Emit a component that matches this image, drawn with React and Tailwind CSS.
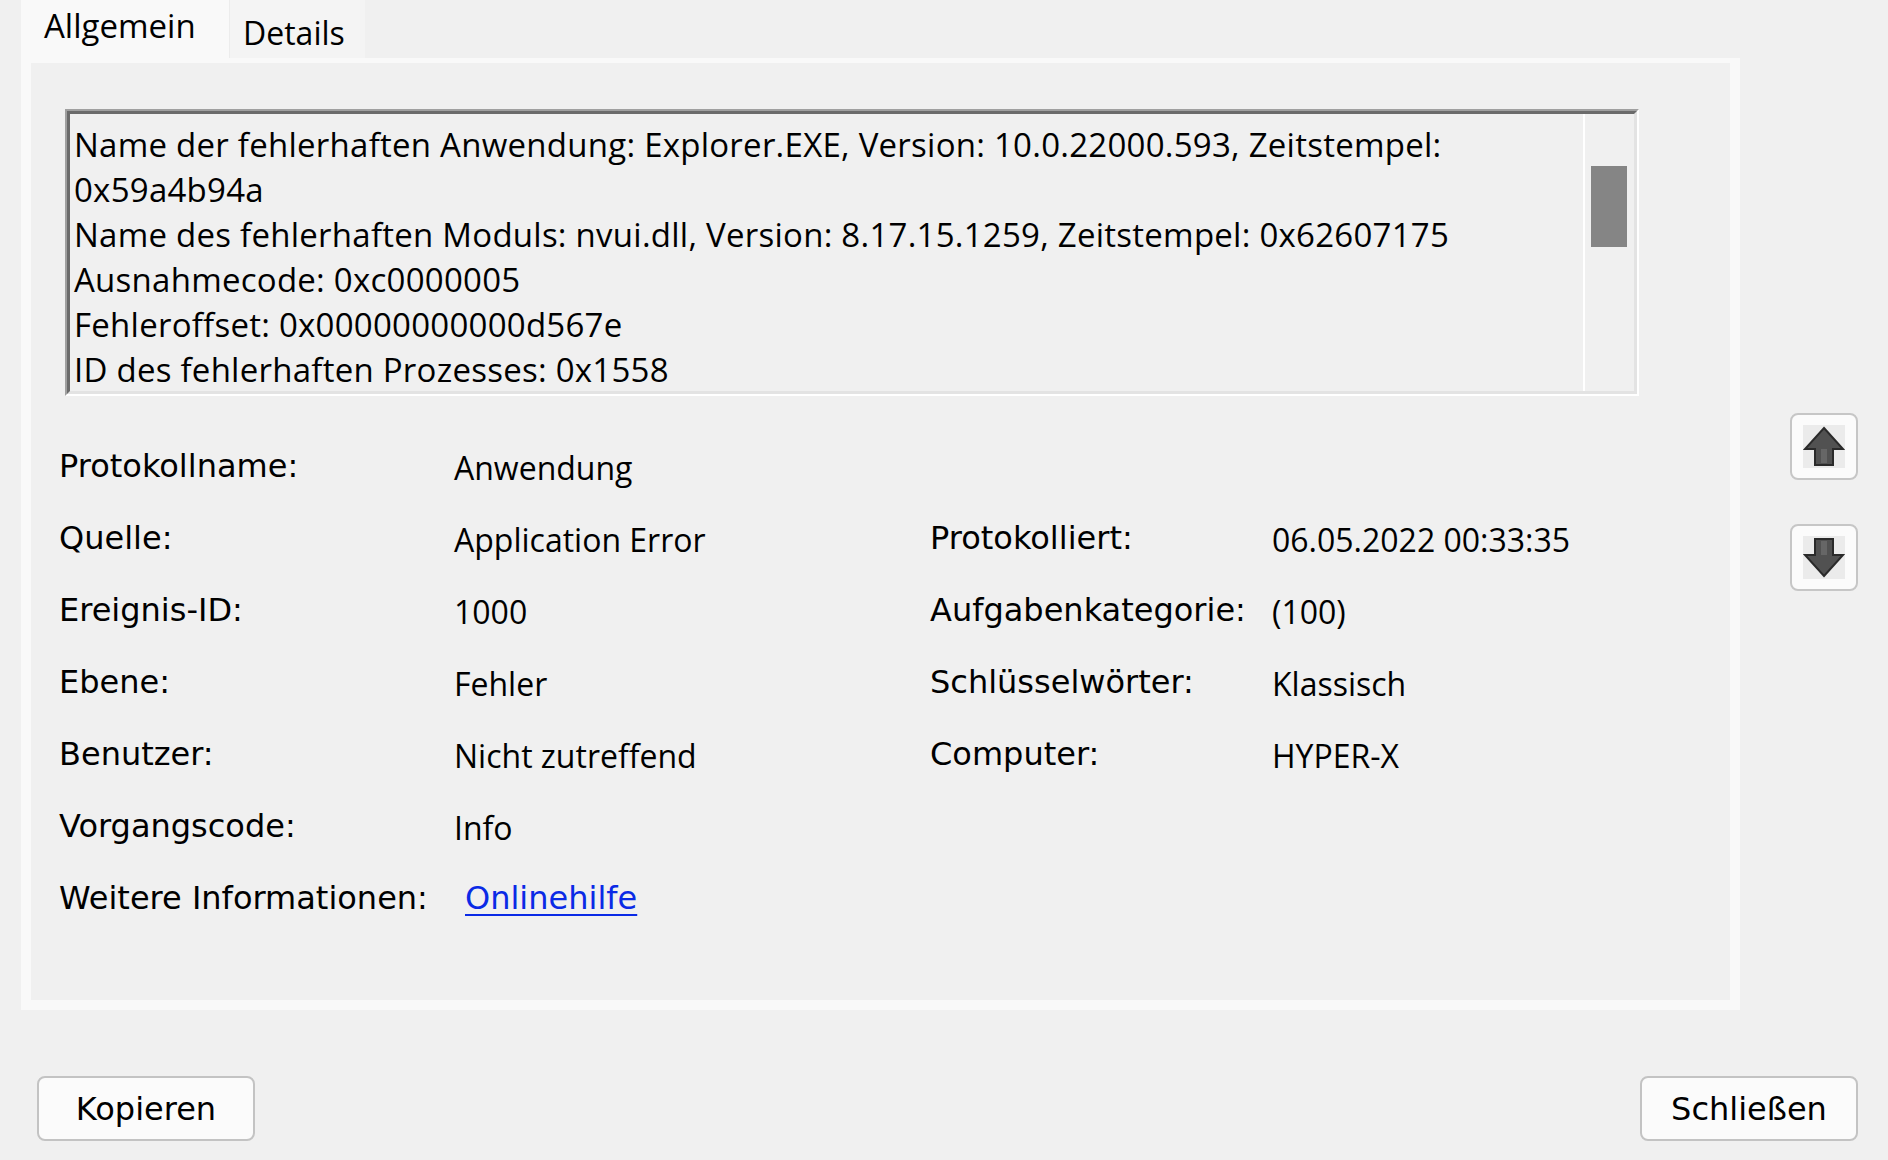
import React from "react";

const LOG_LINES = [
  "Name der fehlerhaften Anwendung: Explorer.EXE, Version: 10.0.22000.593, Zeitstempel:",
  "0x59a4b94a",
  "Name des fehlerhaften Moduls: nvui.dll, Version: 8.17.15.1259, Zeitstempel: 0x62607175",
  "Ausnahmecode: 0xc0000005",
  "Fehleroffset: 0x00000000000d567e",
  "ID des fehlerhaften Prozesses: 0x1558",
];

const ROWS = [
  { label: "Protokollname:", value: "Anwendung" },
  { label: "Quelle:", value: "Application Error", label2: "Protokolliert:", value2: "06.05.2022 00:33:35" },
  { label: "Ereignis-ID:", value: "1000", label2: "Aufgabenkategorie:", value2: "(100)" },
  { label: "Ebene:", value: "Fehler", label2: "Schlüsselwörter:", value2: "Klassisch" },
  { label: "Benutzer:", value: "Nicht zutreffend", label2: "Computer:", value2: "HYPER-X" },
  { label: "Vorgangscode:", value: "Info" },
];

const label = "font-['DejaVu_Sans',sans-serif] text-[32px] text-black";
const value = "font-['Open_Sans',sans-serif] text-[32px] text-black pt-[4px]";

const ArrowIcon = ({ down }) => (
  <svg width="42" height="43" viewBox="0 0 42 43">
    <rect x="0" y="0" width="42" height="43" fill="#ebebeb" />
    <g transform={down ? "translate(0 43) scale(1 -1)" : undefined}>
      <polygon
        points="21,3 40,24 30,24 30,40 12,40 12,24 2,24"
        fill="#515151"
        stroke="#2a2a2a"
        strokeWidth="2"
        strokeLinejoin="miter"
      />
      <rect x="18" y="24" width="6" height="14" fill="#666" />
    </g>
  </svg>
);

const SideButton = ({ down }) => (
  <button className="w-[68px] h-[67px] rounded-[8px] border-2 border-[#c6c6c6] bg-[#fbfbfb] flex items-center justify-center">
    <ArrowIcon down={down} />
  </button>
);

const DialogButton = ({ children }) => (
  <button className={`w-[218px] h-[65px] rounded-[8px] border-2 border-[#c3c3c3] bg-[#fbfbfb] flex items-center justify-center ${label}`}>
    {children}
  </button>
);

export default function App() {
  return (
    <div className="w-[1888px] h-[1160px] bg-[#f0f0f0] flex flex-col overflow-hidden">
      <div className="flex h-[1010px]">
        {/* tab control */}
        <div className="ml-[21px] w-[1719px] flex flex-col">
          <div className="flex h-[58px] items-stretch">
            <div className="w-[208px] bg-[#f9f9f9] flex items-center pl-[23px] pb-[6px] font-['Open_Sans',sans-serif] text-[33px] text-black">
              Allgemein
            </div>
            <div className="w-[136px] bg-[#f4f4f4] border-l border-[#ececec] flex items-center pl-[13px] pt-[7px] font-['Open_Sans',sans-serif] text-[32px] text-black">
              Details
            </div>
          </div>

          <div className="flex-1 border-x-[10px] border-b-[10px] border-t-[5px] border-[#f9f9f9] bg-[#f0f0f0] flex flex-col">
            {/* read-only text box */}
            <div className="ml-[34px] mt-[46px] w-[1574px] h-[287px] border-l-2 border-t-2 border-r-2 border-b-2 border-l-[#a0a0a0] border-t-[#a0a0a0] border-r-white border-b-white">
              <div className="h-full border-l-[3px] border-t-[3px] border-r-[3px] border-b-[3px] border-l-[#6b6b6b] border-t-[#6b6b6b] border-r-[#e3e3e3] border-b-[#e3e3e3] flex">
                <div className="flex-1 overflow-hidden pl-[4px] pt-[8px] font-['Open_Sans',sans-serif] text-[33px] tracking-[0.25px] leading-[45px] text-black">
                  {LOG_LINES.map((l) => (
                    <div key={l} className="whitespace-nowrap">{l}</div>
                  ))}
                </div>
                <div className="w-[51px] border-l-2 border-white">
                  <div className="ml-[6px] mt-[52px] w-[36px] h-[81px] bg-[#858585]" />
                </div>
              </div>
            </div>

            {/* properties */}
            <div className="mt-[34px] ml-[28px] flex flex-col">
              {ROWS.map((r) => (
                <div key={r.label} className="flex h-[72px] items-center">
                  <div className={`w-[395px] ${label}`}>{r.label}</div>
                  <div className={`w-[476px] ${value}`}>{r.value}</div>
                  {r.label2 && <div className={`w-[342px] ${label}`}>{r.label2}</div>}
                  {r.value2 && <div className={value}>{r.value2}</div>}
                </div>
              ))}
              <div className="flex h-[72px] items-center">
                <div className={`w-[406px] ${label}`}>Weitere Informationen:</div>
                <a href="#" className="font-['DejaVu_Sans',sans-serif] text-[32px] text-[#0a2ae6] underline underline-offset-[5px] decoration-2">
                  Onlinehilfe
                </a>
              </div>
            </div>
          </div>
        </div>

        {/* navigation arrows */}
        <div className="ml-[50px] pt-[413px] flex flex-col gap-[44px]">
          <SideButton />
          <SideButton down />
        </div>
      </div>

      <div className="mt-[66px] flex justify-between pl-[37px] pr-[30px]">
        <DialogButton>Kopieren</DialogButton>
        <DialogButton>Schließen</DialogButton>
      </div>
    </div>
  );
}
